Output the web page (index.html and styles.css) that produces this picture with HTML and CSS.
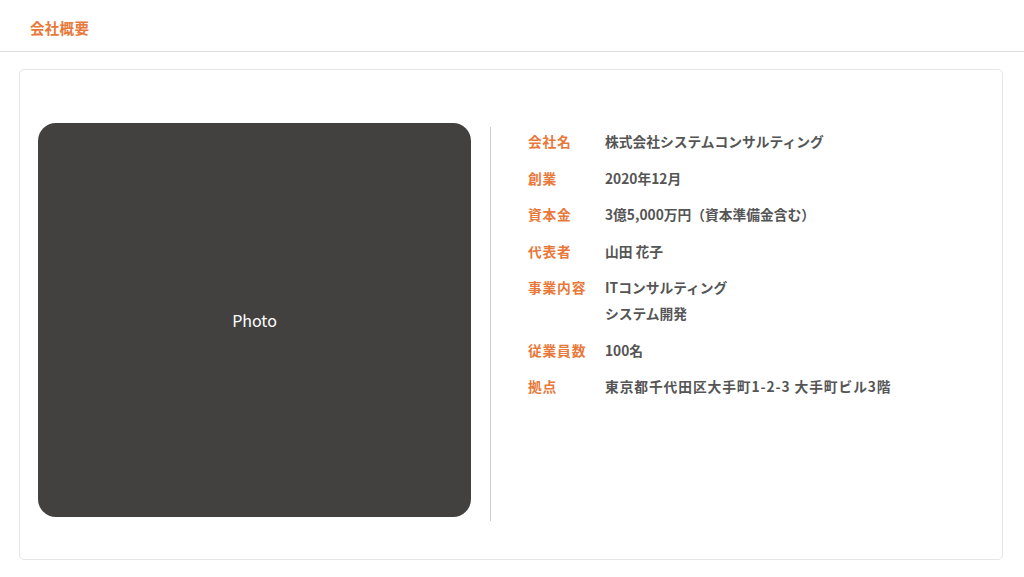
FILE: index.html
```html
<!DOCTYPE html>
<html lang="ja">
<head>
  <meta charset="UTF-8" />
  <meta name="viewport" content="width=device-width, initial-scale=1.0"/>
  <title>会社概要</title>
  <link rel="stylesheet" href="styles.css">
</head>
<body>

<!-- Header -->
<header class="page-header">
  <h1 class="page-title">会社概要</h1>
</header>

<main class="page-main">
  <section class="profile-card">
    <div class="photo">Photo</div>
    <div class="divider"></div>

    <dl class="profile-list">
      <div class="profile-row">
        <dt>会社名</dt>
        <dd>株式会社システムコンサルティング</dd>
      </div>
      <div class="profile-row">
        <dt>創業</dt>
        <dd>2020年12月</dd>
      </div>
      <div class="profile-row">
        <dt>資本金</dt>
        <dd>3億5,000万円（資本準備金含む）</dd>
      </div>
      <div class="profile-row">
        <dt>代表者</dt>
        <dd>山田 花子</dd>
      </div>
      <div class="profile-row">
        <dt>事業内容</dt>
        <dd>ITコンサルティング<br>システム開発</dd>
      </div>
      <div class="profile-row">
        <dt>従業員数</dt>
        <dd>100名</dd>
      </div>
      <div class="profile-row">
        <dt>拠点</dt>
        <dd class="address">東京都千代田区大手町1-2-3 大手町ビル3階</dd>
      </div>
    </dl>
  </section>
</main>

</body>
</html>
```

FILE: styles.css
```css
body {
  margin: 0;
  padding: 0;
  background: white;
  font-family: "Noto Sans CJK JP", "Noto Sans", sans-serif;
  color: #555555;
}

/* Header */
.page-header {
  height: 51px;
  border-bottom: 1px solid #dddddd;
  padding-left: 30px;
  display: flex;
  align-items: center;
}

.page-title {
  margin: 0;
  font-size: 14.5px;
  font-weight: bold;
  color: #e8793a;
  letter-spacing: 0.3px;
  padding-top: 4px;
}

/* Main card */
.page-main {
  padding: 17px 21px 0 19px;
}

.profile-card {
  display: flex;
  align-items: flex-start;
  border: 1px solid #e6e6e6;
  border-radius: 5px;
  padding: 53px 18px 38px 18px;
}

.photo {
  width: 433px;
  height: 394px;
  flex-shrink: 0;
  background: #424140;
  border-radius: 18px;
  color: white;
  font-size: 16px;
  display: flex;
  align-items: center;
  justify-content: center;
}

.divider {
  width: 1px;
  height: 394px;
  margin: 4px 37px 0 19px;
  background: #cccccc;
}

.profile-list {
  margin: 5px 0 0 0;
  font-size: 13.75px;
  font-weight: bold;
  line-height: 26px;
}

.profile-row {
  display: flex;
  margin-bottom: 10.5px;
}

.profile-row dt {
  width: 77px;
  flex-shrink: 0;
  color: #e8793a;
  letter-spacing: 0.8px;
}

.profile-row dd {
  margin: 0;
  color: #555555;
}

.profile-row dd.address {
  letter-spacing: 0.9px;
}
```
